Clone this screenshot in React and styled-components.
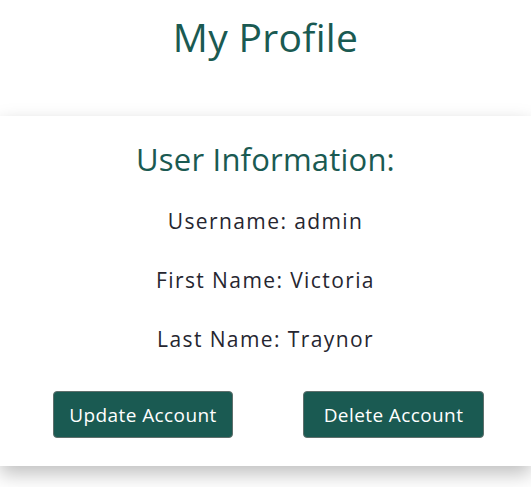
import React from "react";
import styled, { createGlobalStyle } from "styled-components";

const GlobalStyle = createGlobalStyle`
    body {
        margin: 0;
        background: #ffffff;
        font-family: "Open Sans", "Noto Sans", sans-serif;
    }
`

const Page = styled.div`
    display: flex;
    flex-direction: column;
    min-height: 487px;
`

const Title = styled.h1`
    margin: 0;
    padding-top: 10px;
    height: 103px;
    box-sizing: border-box;
    text-align: center;
    font-size: 39px;
    font-weight: 400;
    letter-spacing: 0.3px;
    color: #1a5a52;
`

const Card = styled.section`
    display: flex;
    flex-direction: column;
    align-items: center;
    height: 350px;
    box-sizing: border-box;
    padding-top: 22px;
    margin-top: 13px;
    background: #ffffff;
    box-shadow: 0 8px 18px rgba(0, 0, 0, 0.25);
`

const Heading = styled.h2`
    margin: 0 0 23px;
    font-size: 31px;
    font-weight: 400;
    letter-spacing: 0.2px;
    color: #1a5a52;
`

const Field = styled.p`
    margin: 0 0 23px;
    font-size: 21px;
    font-weight: 400;
    letter-spacing: 1.4px;
    line-height: 36px;
    color: #262630;
`

const Actions = styled.div`
    display: flex;
    justify-content: center;
    gap: 70px;
    align-self: stretch;
    padding-left: 6px;
    margin-top: 11px;
`

const Button = styled.button`
    width: ${(p) => p.$width}px;
    height: 47px;
    padding: 0;
    border: 1px solid #5f6f6c;
    border-radius: 4px;
    background: #1a5a52;
    color: #ffffff;
    font-family: inherit;
    font-size: 19px;
    font-weight: 400;
    letter-spacing: 0.4px;
    cursor: pointer;
`

const user = { username: "admin", firstName: "Victoria", lastName: "Traynor" };

const App = () => {
    return (
        <Page>
            <GlobalStyle />
            <Title>My Profile</Title>
            <Card>
                <Heading>User Information:</Heading>
                <Field>{`Username: ${user.username}`}</Field>
                <Field>{`First Name: ${user.firstName}`}</Field>
                <Field>{`Last Name: ${user.lastName}`}</Field>
                <Actions>
                    <Button $width={180}>Update Account</Button>
                    <Button $width={181}>Delete Account</Button>
                </Actions>
            </Card>
        </Page>
    )
}

export default App;
